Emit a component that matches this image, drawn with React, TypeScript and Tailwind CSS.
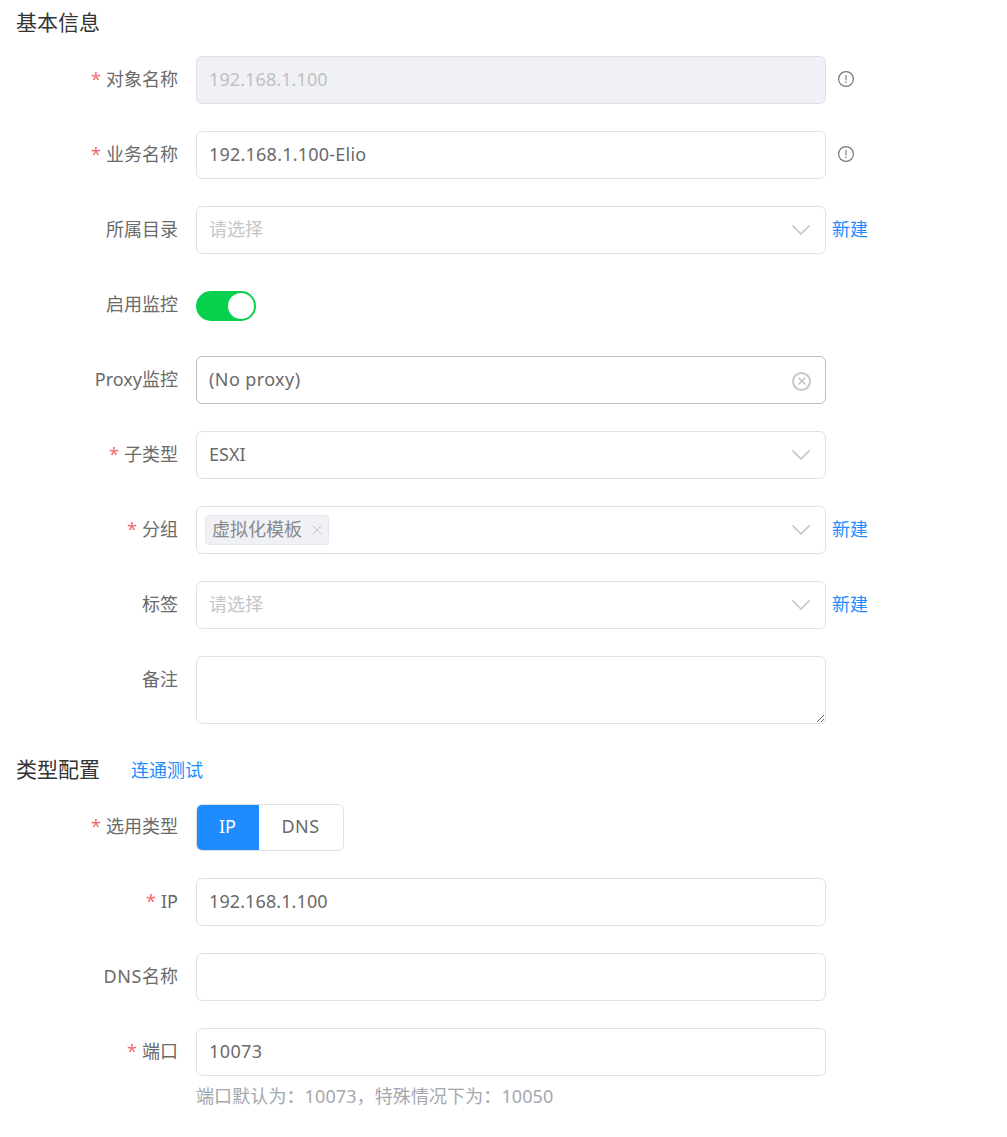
import { ChevronDown, X } from "lucide-react";

const fieldBase =
  "h-12 w-[630px] shrink-0 rounded-md border bg-white px-3 text-[18px] text-[#6a6a6a] outline-none";
const fieldBorder = "border-[#dfe1e6]";

function Row({
  label,
  required = false,
  className = "mb-[27px]",
  children,
}: {
  label: React.ReactNode;
  required?: boolean;
  className?: string;
  children?: React.ReactNode;
}) {
  return (
    <div className={`flex items-start ${className}`}>
      <label className="flex h-12 w-[178px] shrink-0 items-center justify-end pb-0.5 text-[18px] leading-none text-[#6a6a6a]">
        {required && <span className="mr-[5px] text-[#f56c6c]">*</span>}
        {label}
      </label>
      <div className="ml-[18px] flex min-w-0 items-start">{children}</div>
    </div>
  );
}

function InfoIcon() {
  return (
    <svg viewBox="0 0 16 16" className="ml-3 mt-[15px] h-4 w-4 text-[#777]" fill="none" stroke="currentColor">
      <circle cx="8" cy="8" r="7.4" strokeWidth="1.2" />
      <path d="M8 4v5.2" strokeWidth="1.1" />
      <path d="M8 10.6v1.4" strokeWidth="1.2" />
    </svg>
  );
}

function NewLink() {
  return <a className="ml-1.5 flex h-12 items-center pb-0.5 text-[18px] text-[#1e8cff]">新建</a>;
}

function Chevron() {
  return <ChevronDown className="-mr-1 h-8 w-8 text-[#c4c4c4]" strokeWidth={1.3} />;
}

function SelectBox({ placeholder, value }: { placeholder?: string; value?: string }) {
  return (
    <div className={`${fieldBase} ${fieldBorder} flex items-center justify-between`}>
      <span className={value ? "pb-0.5 text-[#6a6a6a]" : "pb-0.5 text-[#c4c6cb]"}>{value ?? placeholder}</span>
      <Chevron />
    </div>
  );
}

function SectionTitle({ children }: { children: React.ReactNode }) {
  return <h2 className="text-[21px] leading-7 font-normal text-[#333]">{children}</h2>;
}

export default function App() {
  return (
    <div
      className="h-[1137px] overflow-hidden bg-white pl-4 pt-2"
      style={{ fontFamily: '"Noto Sans", "Noto Sans CJK SC", sans-serif' }}
    >
      <SectionTitle>基本信息</SectionTitle>
      <div className="-ml-4 mt-5">
        <Row label="对象名称" required>
          <input
            readOnly
            disabled
            value="192.168.1.100"
            className={`${fieldBase} ${fieldBorder} pb-0.5 tracking-[0.1px] disabled:bg-[#f0f1f6] disabled:text-[#c0c0c0]`}
          />
          <InfoIcon />
        </Row>
        <Row label="业务名称" required>
          <input
            readOnly
            value="192.168.1.100-Elio"
            className={`${fieldBase} ${fieldBorder} pb-0.5 tracking-[0.22px]`}
          />
          <InfoIcon />
        </Row>
        <Row label="所属目录">
          <SelectBox placeholder="请选择" />
          <NewLink />
        </Row>
        <Row label="启用监控">
          <div className="flex h-12 items-center pt-0.5">
            <div className="flex h-[30px] w-[60px] items-center justify-end rounded-full bg-[#07d14c] pr-0.5">
              <span className="h-[26px] w-[26px] rounded-full bg-white" />
            </div>
          </div>
        </Row>
        <Row label="Proxy监控">
          <div className={`${fieldBase} flex items-center justify-between border-[#bdbdbd]`}>
            <span className="pb-0.5 tracking-[0.4px]">(No proxy)</span>
            <span className="mr-[2px] mt-0.5 flex h-[19px] w-[19px] items-center justify-center rounded-full border-2 border-[#c8c8c8]">
              <X className="h-3 w-3 text-[#c0c0c0]" strokeWidth={3} />
            </span>
          </div>
        </Row>
        <Row label="子类型" required>
          <SelectBox value="ESXI" />
        </Row>
        <Row label="分组" required>
          <div className={`${fieldBase} ${fieldBorder} flex items-center justify-between pl-2`}>
            <span className="flex h-[30px] items-center rounded border border-[#e6e8ee] bg-[#f0f1f5] pl-[6px] pr-[3px] text-[#87898d]">
              <span className="pb-0.5">虚拟化模板</span>
              <X className="ml-[7px] h-4 w-4 text-[#b5b7bb]" strokeWidth={1.2} />
            </span>
            <Chevron />
          </div>
          <NewLink />
        </Row>
        <Row label="标签">
          <SelectBox placeholder="请选择" />
          <NewLink />
        </Row>
        <Row label="备注" className="mb-[31px]">
          <textarea
            readOnly
            className={`${fieldBase} ${fieldBorder} block h-[68px] py-2`}
          />
        </Row>
      </div>

      <div className="flex items-start">
        <SectionTitle>类型配置</SectionTitle>
        <a className="ml-[31px] pt-px text-[18px] leading-7 text-[#1e8cff]">连通测试</a>
      </div>

      <div className="-ml-4 mt-[19px]">
        <Row label="选用类型" required>
          <div className="mt-px flex h-[47px] w-[148px] overflow-hidden rounded-md border border-[#dfe1e6] text-[18px]">
            <button className="-m-px w-[63px] bg-[#1e8cff] pb-0.5 text-white">IP</button>
            <button className="flex-1 pb-0.5 tracking-[0.5px] text-[#6a6a6a]">DNS</button>
          </div>
        </Row>
        <Row label="IP" required>
          <input readOnly value="192.168.1.100" className={`${fieldBase} ${fieldBorder} pb-0.5 tracking-[0.1px]`} />
        </Row>
        <Row
          label={
            <>
              <span className="tracking-[0.6px]">DNS</span>名称
            </>
          }
        >
          <input readOnly value="" className={`${fieldBase} ${fieldBorder}`} />
        </Row>
        <Row label="端口" required className="mb-0">
          <div>
            <input readOnly value="10073" className={`${fieldBase} ${fieldBorder} pb-0.5 tracking-[0.4px]`} />
            <p className="mt-2 text-[18px] leading-6 tracking-[0.1px] text-[#a4a8ae]">
              端口默认为：10073，特殊情况下为：10050
            </p>
          </div>
        </Row>
      </div>
    </div>
  );
}
